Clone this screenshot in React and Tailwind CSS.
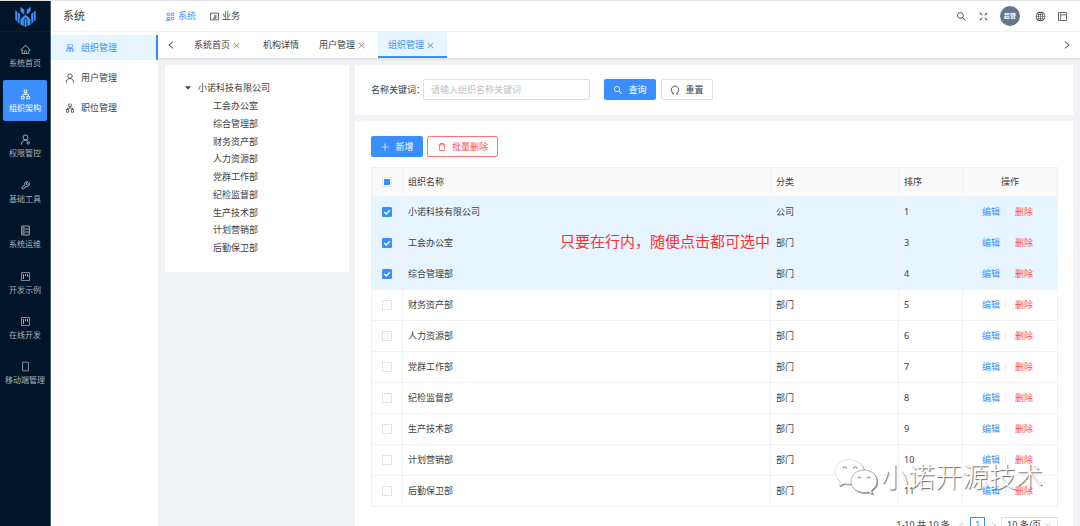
import React, { useState } from "react";
import {
  AiOutlineHome, AiOutlineCluster, AiOutlineTool, AiOutlineProject,
  AiOutlineMobile, AiOutlineSearch, AiOutlineFullscreen, AiOutlineGlobal, AiOutlineLayout,
  AiOutlineApartment, AiOutlineClose, AiOutlineLeft,
  AiOutlineRight, AiOutlineDown, AiOutlinePlus, AiOutlineDelete, AiFillCaretDown,
} from "react-icons/ai";

const Svg = ({ children, className = "" }) => (
  <svg viewBox="0 0 16 16" width="1em" height="1em" fill="none" stroke="currentColor" strokeWidth="1.4" className={className} aria-hidden="true">
    {children}
  </svg>
);

const UserIcon = () => (
  <Svg><circle cx="8" cy="5" r="3.6" /><path d="M2 15.500c0-4 2.600-6.600 6-6.600s6 2.600 6 6.600" /></Svg>
);
const RoleIcon = () => (
  <Svg><circle cx="8" cy="5" r="3.6" /><path d="M2 15.500c0-4 2.600-6.600 6-6.600 1.500 0 2.800.4 3.800 1.300" /><circle cx="12" cy="13" r="1.700" /></Svg>
);
const ServerIcon = () => (
  <Svg><path d="M2.500 1.500h11v13h-11zM2.500 5.800h11M2.500 10.200h11M4.500 3.700h2M4.500 8h2M4.500 12.400h2" /></Svg>
);
const SystemIcon = () => (
  <Svg><path d="M2 2h4.500v4H2zM9.500 2H14v4H9.500zM2 9.500h4.500v4H2zM9.500 9.500H14v4H9.500zM0 14.800h8" /></Svg>
);
const BizIcon = () => (
  <Svg><path d="M1 2h14v12H1zM8.500 5v6M5 11h6M10.500 5v6" /></Svg>
);
const ResetIcon = () => (
  <Svg className="text-[10px]"><path d="M3 14.300H5.500V13.200A6 6 0 1 1 10.500 13.200V14.300H13" /></Svg>
);
const Logo = () => (
  <svg viewBox="0 0 21 21" className="h-[21px] w-[21px]" fill="#3c93f5" aria-hidden="true">
    <path d="M5.500.8L9.300 4v4.800L7.800 7.600 5.500 5.200zM15.500.8L11.700 4v4.800l1.500-1.200 2.300-2.400zM10.500 8.800l2.200 1.600 2.800 2.800v5.200l-3.300 1.900V13l-1.700-1.600L8.800 13v7.300l-3.300-1.900v-5.200l2.800-2.800zM.3 4.200l2 1.800v9.800l-2-1.800zM2.900 6.500l2 1.600v3.900l-.3.500v5.400l-1.700-1.600zM20.700 4.200l-2 1.800v9.800l2-1.800zM18.100 6.500l-2 1.600v3.900l.3.500v5.400l1.700-1.600zM9.500 13.200l1-1 1 1v7.500h-2z" />
  </svg>
);

const modules = [
  ["系统首页", AiOutlineHome], ["组织架构", AiOutlineApartment], ["权限管控", RoleIcon], ["基础工具", AiOutlineTool],
  ["系统运维", ServerIcon], ["开发示例", AiOutlineProject], ["在线开发", AiOutlineProject], ["移动端管理", AiOutlineMobile],
];
const menus = [["组织管理", AiOutlineCluster], ["用户管理", UserIcon], ["职位管理", AiOutlineApartment]];
const departments = ["工会办公室", "综合管理部", "财务资产部", "人力资源部", "党群工作部", "纪检监督部", "生产技术部", "计划营销部", "后勤保卫部"];
const rows = [
  ["小诺科技有限公司", "公司", 1],
  ...departments.map((name, i) => [name, "部门", i + 3]),
];

function ModuleNav() {
  return (
    <aside className="w-[51px] shrink-0 border-r border-[#4d5b68] bg-[#001529]">
      <div className="flex h-[31px] items-center justify-center border-b border-[#0b1f31]"><Logo /></div>
      <nav className="flex h-[362px] flex-col justify-between px-[3px] pt-[3px]">
        {modules.map(([label, Icon], i) => (
          <a key={label} href="#" className={`flex h-[41px] flex-col items-center justify-center gap-[3px] rounded-[2px] whitespace-nowrap ${i === 1 ? "bg-[#3b8ffc] text-white" : "text-[#a9b1b8]"}`}>
            <span className="text-[11px] leading-[11px]"><Icon /></span>
            <span className="text-[8px] leading-[10px]">{label}</span>
          </a>
        ))}
      </nav>
    </aside>
  );
}

function SideMenu() {
  return (
    <aside className="w-[107px] shrink-0 bg-white">
      <h1 className="flex h-[31px] items-center border-b border-[#f3f4f6] pl-3 text-[11px]">系统</h1>
      <nav className="flex flex-col gap-[5px] pt-[3px]">
        {menus.map(([label, Icon], i) => (
          <a key={label} href="#" className={`flex h-[25px] items-center gap-1.5 pl-[14px] ${i === 0 ? "border-r-2 border-[#3b8ffc] bg-[#e6f5ff] text-[#3b8ffc]" : ""}`}>
            <span className="text-[10px]"><Icon /></span>{label}
          </a>
        ))}
      </nav>
    </aside>
  );
}

function Header() {
  return (
    <header className="flex h-[31px] items-center justify-between border-b border-[#f3f4f6] bg-white pr-3 pl-2">
      <nav className="flex gap-[14px]">
        <a href="#" className="flex items-center gap-[3px] text-[#3b8ffc]"><span className="text-[9px]"><SystemIcon /></span>系统</a>
        <a href="#" className="flex items-center gap-[3px]"><span className="text-[9px]"><BizIcon /></span>业务</a>
      </nav>
      <div className="flex items-center text-[11px]">
        <button aria-label="搜索" className="mr-[11px]"><AiOutlineSearch /></button>
        <button aria-label="全屏" className="mr-[11px]"><AiOutlineFullscreen /></button>
        <button className="mr-[15px] flex h-5 w-5 items-center justify-center rounded-full bg-[#65748b] text-[6px] font-bold text-white">超管</button>
        <button aria-label="语言" className="mr-[11px]"><AiOutlineGlobal /></button>
        <button aria-label="布局"><AiOutlineLayout /></button>
      </div>
    </header>
  );
}

function Tabs() {
  const tabs = [["系统首页", true], ["机构详情", false], ["用户管理", true], ["组织管理", true]];
  return (
    <div className="relative flex h-[26px] items-stretch bg-white pr-2 shadow-[0_1px_3px_rgba(0,21,41,0.12)]">
      <button aria-label="向左" className="w-[26px] pl-2 text-[10px]"><AiOutlineLeft /></button>
      {tabs.map(([label, closable], i) => (
        <div key={label} className={`flex items-center gap-[2px] px-[10px] ${i === 3 ? "bg-[#e6f5ff] text-[#3b8ffc] shadow-[inset_0_-2px_0_#3b8ffc]" : ""}`}>
          <a href="#">{label}</a>
          {closable && <button aria-label={`关闭${label}`} className="pr-[2px] text-[9px] text-[#8c8c8c]"><AiOutlineClose /></button>}
        </div>
      ))}
      <button aria-label="向右" className="ml-auto text-[10px]"><AiOutlineRight /></button>
    </div>
  );
}

function OrgTree() {
  return (
    <section className="w-[184px] shrink-0 self-start bg-white pt-[14px] pb-4 pl-[19px]">
      <div className="flex h-[18px] items-center gap-1.5"><AiFillCaretDown className="h-2 w-2" />小诺科技有限公司</div>
      <ul className="flex h-[159px] flex-col justify-between pl-[29px]">
        {departments.map((d) => <li key={d} className="leading-[17px]">{d}</li>)}
      </ul>
    </section>
  );
}

function SearchBar() {
  return (
    <form className="flex items-center bg-white px-4 pt-[14px] pb-[15px]" onSubmit={(e) => e.preventDefault()}>
      <label htmlFor="kw" className="w-[52px] whitespace-nowrap">名称关键词：</label>
      <input id="kw" placeholder="请输入组织名称关键词" className="h-[21px] w-[167px] rounded-[2px] border border-[#e0e0e0] px-[7px] placeholder:text-[#bfbfbf]" />
      <button className="ml-[14px] flex h-[21px] w-[52px] items-center justify-center gap-[5px] rounded-[2px] bg-[#3b8ffc] text-white"><AiOutlineSearch className="text-[10px]" />查询</button>
      <button type="reset" className="ml-[5px] flex h-[21px] w-[52px] items-center justify-center gap-[5px] rounded-[2px] border border-[#e0e0e0]"><ResetIcon />重置</button>
    </form>
  );
}

function Check({ checked, mixed, onChange, label }) {
  return (
    <label className="relative mx-auto block h-[10px] w-[10px]">
      <input type="checkbox" aria-label={label} checked={checked} onChange={onChange}
        className="block h-[10px] w-[10px] appearance-none border border-[#e3e3e3] bg-white checked:rounded-[1px] checked:border-[#3b8ffc] checked:bg-[#3b8ffc]" />
      {mixed && <span className="absolute inset-[2px] bg-[#3b8ffc]" />}
      {checked && <svg viewBox="0 0 10 10" className="pointer-events-none absolute inset-0" fill="none" stroke="white" strokeWidth="1.3"><path d="M2.300 5l2 2 3.500-3.800" /></svg>}
    </label>
  );
}

function OrgTable() {
  const [selected, setSelected] = useState([0, 1, 2]);
  const toggle = (i) => setSelected((s) => (s.includes(i) ? s.filter((x) => x !== i) : [...s, i]));
  const all = selected.length === rows.length;
  const cell = "border-r border-b border-[#f0f1f3]";
  return (
    <table className="w-full table-fixed border-separate border-spacing-0 border-t border-l border-[#f0f1f3] text-left">
      <colgroup><col className="w-[31px]" /><col /><col className="w-[128px]" /><col className="w-[64px]" /><col className="w-[95px]" /></colgroup>
      <thead className="bg-[#fafafa]">
        <tr className="h-[29px]">
          <th className={cell}><Check label="全选" checked={all} mixed={selected.length > 0 && !all} onChange={() => setSelected(all ? [] : rows.map((_, i) => i))} /></th>
          <th className={`${cell} px-[5px] font-normal`}>组织名称</th>
          <th className={`${cell} px-[5px] font-normal`}>分类</th>
          <th className={`${cell} px-[5px] font-normal`}>排序</th>
          <th className={`${cell} text-center font-normal`}>操作</th>
        </tr>
      </thead>
      <tbody>
        {rows.map(([name, type, order], i) => (
          <tr key={name} onClick={() => toggle(i)} className={`h-[31px] ${selected.includes(i) ? "bg-[#e6f5ff]" : ""}`}>
            <td className={cell} onClick={(e) => e.stopPropagation()}><Check label={name} checked={selected.includes(i)} onChange={() => toggle(i)} /></td>
            <td className={`${cell} px-[5px]`}>{name}</td>
            <td className={`${cell} px-[5px]`}>{type}</td>
            <td className={`${cell} px-[5px]`}>{order}</td>
            <td className={cell}>
              <div className="flex items-center pl-[19px]">
                <a href="#" className="text-[#3b8ffc]">编辑</a>
                <span className="mr-[9px] ml-[5px] h-2 w-px bg-[#e9edf1]" />
                <a href="#" className="text-[#ff4d4f]">删除</a>
              </div>
            </td>
          </tr>
        ))}
      </tbody>
    </table>
  );
}

function Pager() {
  return (
    <div className="mt-[10px] flex h-4 items-center justify-end">
      <span>1-10 共 10 条</span>
      <button aria-label="上一页" className="ml-[7px] text-[9px] text-[#bfbfbf]"><AiOutlineLeft /></button>
      <button className="mx-1 h-4 w-[15px] border border-[#3b8ffc] leading-[14px] text-[#3b8ffc]">1</button>
      <button aria-label="下一页" className="text-[9px] text-[#bfbfbf]"><AiOutlineRight /></button>
      <div className="relative ml-[3px] flex items-center">
        <select aria-label="每页条数" className="h-4 w-[57px] appearance-none border border-[#e0e0e0] pl-[5px] leading-[14px]"><option>10 条/页</option></select>
        <AiOutlineDown className="pointer-events-none absolute right-1.5 text-[8px] text-[#bfbfbf]" />
      </div>
    </div>
  );
}

function Watermark() {
  return (
    <div className="pointer-events-none absolute right-[37px] bottom-[30px] flex items-center gap-1">
      <svg viewBox="0 0 44 38" className="h-[38px] w-11 drop-shadow-[1px_1px_0px_rgba(90,90,90,0.7)]" fill="white" stroke="#d0d0d0" strokeWidth="0.6" aria-hidden="true">
        <path d="M16.500 1.500C8.500 1.500 2 7 2 14c0 4 2 7.300 5.300 9.500L6 28l5-2.600c1.700.5 3.500.7 5.500.7C24.500 26 31 21 31 14S24.500 1.500 16.500 1.500z" />
        <path stroke="#8a8a8a" d="M31 12c-7.300 0-13 5-13 11.300S23.700 34.500 31 34.500c1.500 0 3-.2 4.300-.6l4.200 2.300-1.100-3.900c3.300-2.100 5.600-5.300 5.600-9C44 17 38.300 12 31 12z" />
        <g fill="none" stroke="#777" strokeWidth="1"><path d="M10 10.500a1.700 1.700 0 0 1 3.400 0M20.500 10.500a1.700 1.700 0 0 1 3.400 0M25 20.500a1.500 1.500 0 0 1 3 0M34 20.500a1.500 1.500 0 0 1 3 0" /></g>
      </svg>
      <span className="text-[27px] leading-[36px] font-light text-white [text-shadow:1px_1px_1px_rgba(60,60,60,0.8)]">小诺开源技术</span>
    </div>
  );
}

export default function App() {
  return (
    <div className="relative flex h-screen overflow-hidden border-t border-[#e3e3e3] bg-[#f0f2f5] font-['Noto_Sans','Noto_Sans_CJK_SC',sans-serif] text-[9px] leading-[14px] text-[#404040]">
      <ModuleNav />
      <SideMenu />
      <div className="flex min-w-0 flex-1 flex-col">
        <Header />
        <Tabs />
        <main className="flex min-h-0 flex-1 gap-1.5 px-[7px] pt-[7px]">
          <OrgTree />
          <div className="flex min-w-0 flex-1 flex-col gap-1.5">
            <SearchBar />
            <section className="flex-1 bg-white pt-[15px] pr-[15px] pl-4">
              <div className="mb-[10px] flex gap-1">
                <button className="flex h-[21px] w-[52px] items-center justify-center gap-[5px] rounded-[2px] bg-[#3b8ffc] text-white"><AiOutlinePlus className="text-[10px]" />新增</button>
                <button className="flex h-[21px] w-[71px] items-center justify-center gap-[5px] rounded-[2px] border border-[#ff7375] text-[#ff4d4f]"><AiOutlineDelete className="text-[10px]" />批量删除</button>
              </div>
              <div className="relative">
                <OrgTable />
                <p className="pointer-events-none absolute top-[63px] left-[189px] text-[15px] leading-[22px] text-[#fa3232]">只要在行内，随便点击都可选中</p>
              </div>
              <Pager />
            </section>
          </div>
        </main>
      </div>
      <Watermark />
    </div>
  );
}
